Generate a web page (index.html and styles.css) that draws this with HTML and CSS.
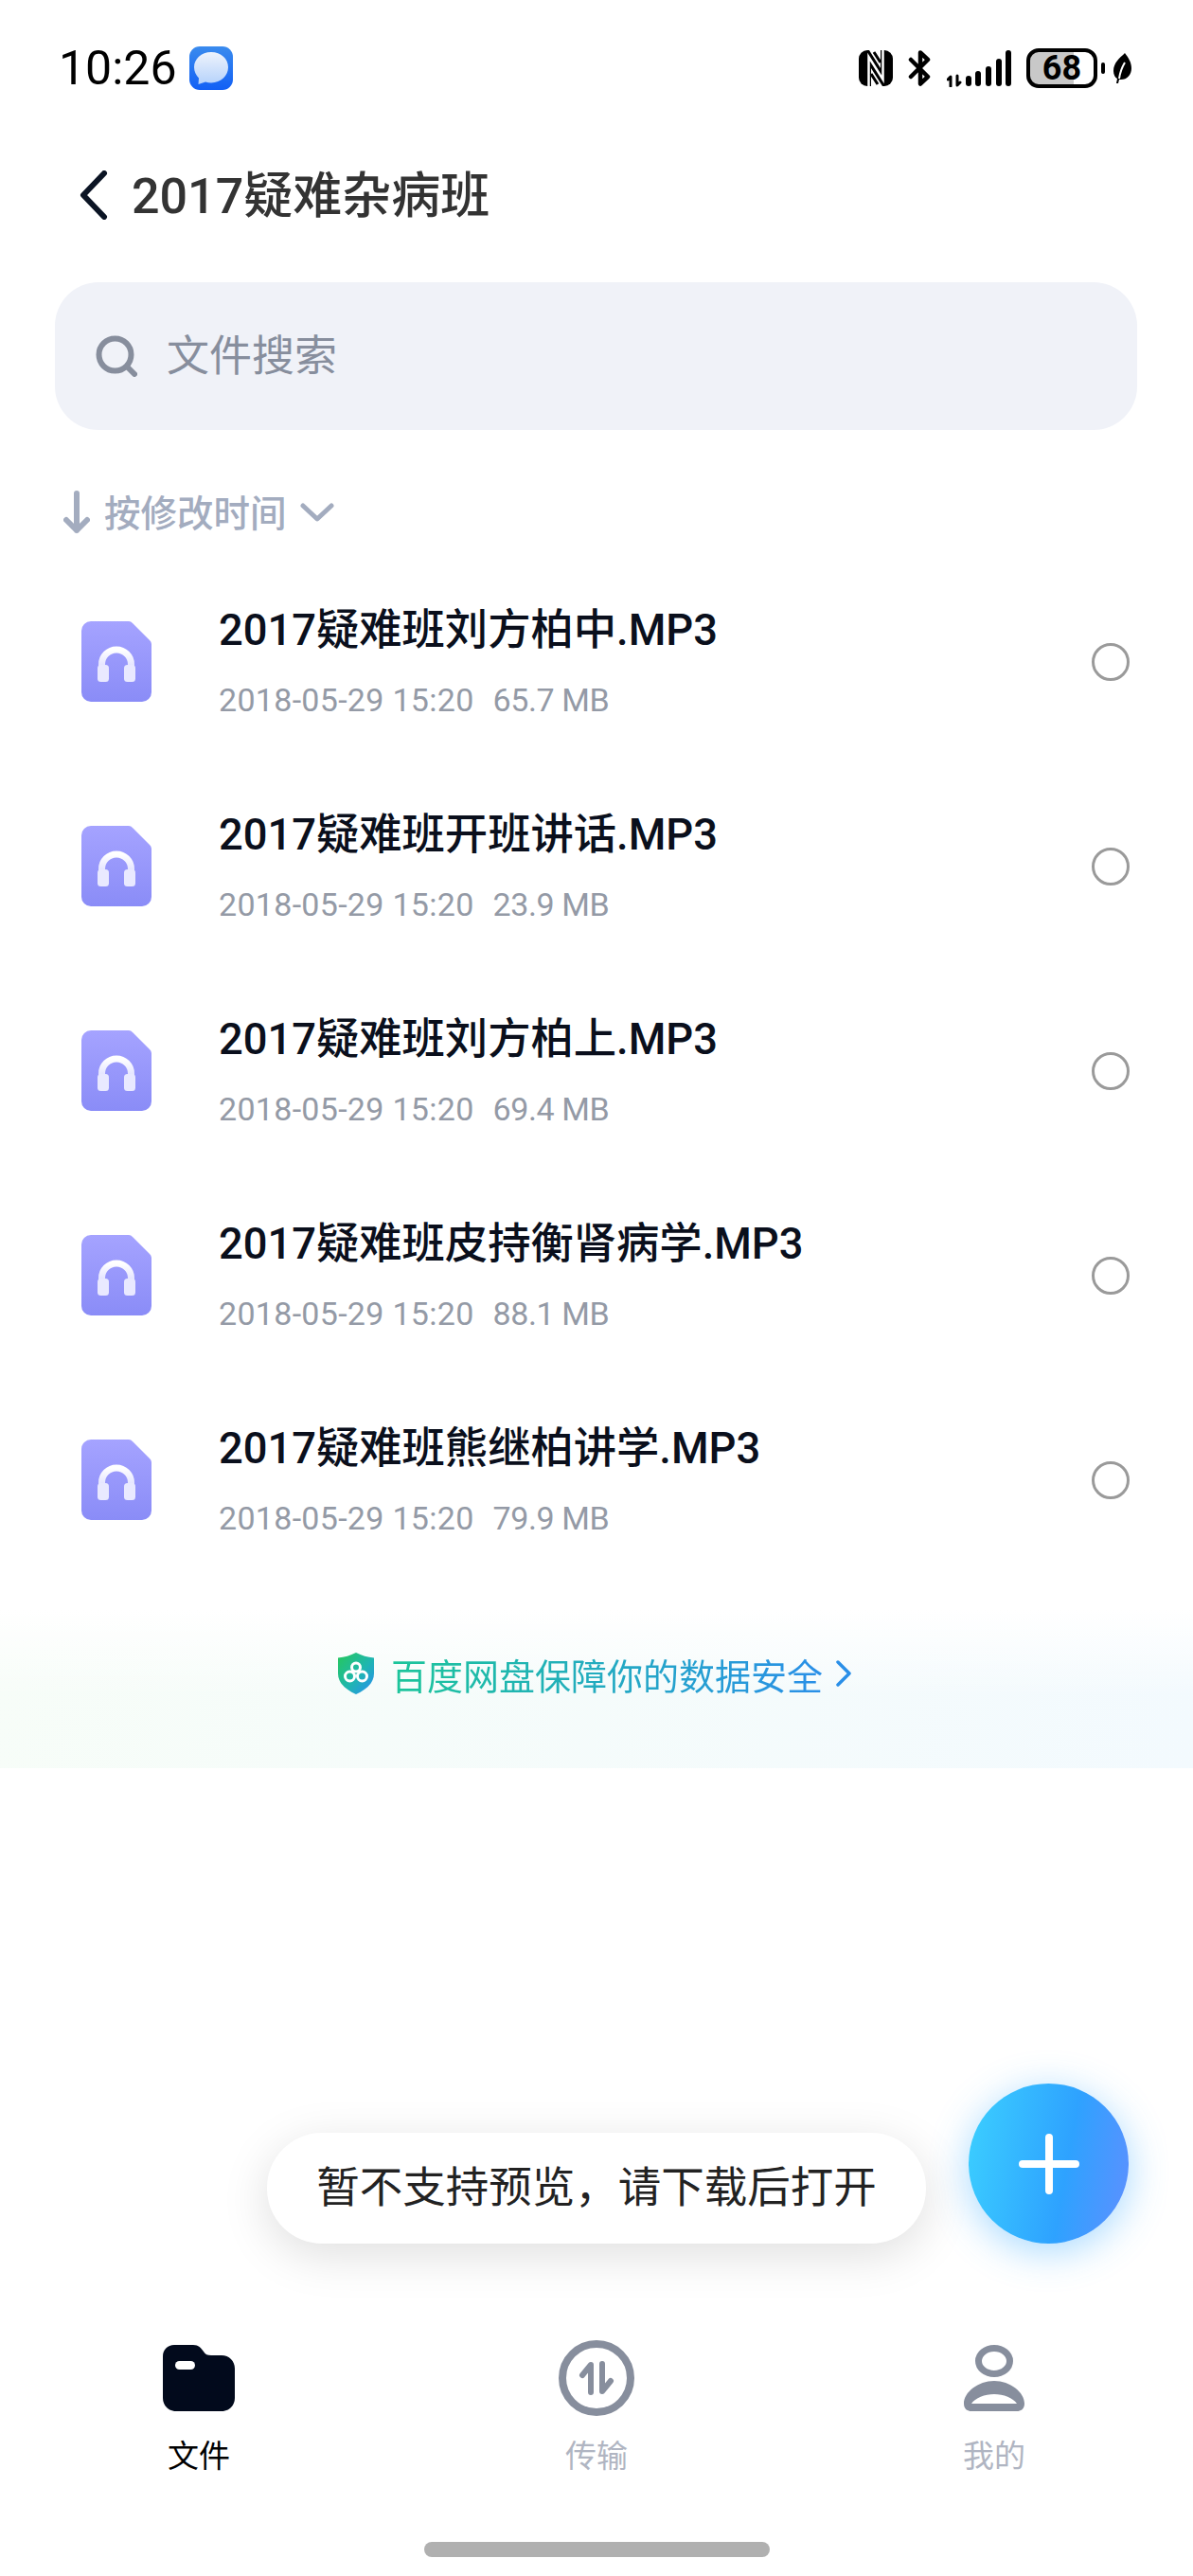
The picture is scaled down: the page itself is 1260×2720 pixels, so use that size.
FILE: index.html
```html
<!DOCTYPE html>
<html lang="zh-CN">
<head>
    <meta charset="UTF-8">
    <meta name="viewport" content="width=device-width, initial-scale=1.0">
    <title>2017疑难杂病班</title>
    <link rel="stylesheet" href="styles.css">
</head>
<body>
    <svg class="defs" width="0" height="0">
        <defs>
            <linearGradient id="fileFill" x1="0" y1="0" x2="0" y2="1">
                <stop offset="0" stop-color="#a5a3ff"/>
                <stop offset="1" stop-color="#8a8cf7"/>
            </linearGradient>
            <linearGradient id="phoneFill" x1="0" y1="0" x2="0" y2="1">
                <stop offset="0" stop-color="#ffffff"/>
                <stop offset="1" stop-color="#dcdcff"/>
            </linearGradient>
            <linearGradient id="shieldFill" x1="0" y1="0" x2="1" y2="1">
                <stop offset="0" stop-color="#26c85a"/>
                <stop offset="0.55" stop-color="#1fb6b0"/>
                <stop offset="1" stop-color="#2a8cf5"/>
            </linearGradient>
            <linearGradient id="msgFill" x1="0" y1="0" x2="0" y2="1">
                <stop offset="0" stop-color="#3a8bee"/>
                <stop offset="1" stop-color="#1260f5"/>
            </linearGradient>
            <linearGradient id="bubbleFill" x1="0" y1="0" x2="0" y2="1">
                <stop offset="0" stop-color="#eef3fc"/>
                <stop offset="1" stop-color="#b5d2fb"/>
            </linearGradient>
            <symbol id="audio-file" viewBox="0 0 74 85">
                <path d="M10 0H50a6 6 0 0 1 4 2L72 20a6 6 0 0 1 2 4V75a10 10 0 0 1-10 10H10A10 10 0 0 1 0 75V10A10 10 0 0 1 10 0z" fill="url(#fileFill)"/>
                <path d="M21.500 52V45.500a15.500 15.500 0 0 1 31 0V52" fill="none" stroke="url(#phoneFill)" stroke-width="7"/>
                <rect x="17" y="46" width="12" height="18" rx="3.500" fill="#e9e9ff"/>
                <rect x="45" y="46" width="12" height="18" rx="3.500" fill="#e9e9ff"/>
            </symbol>
        </defs>
    </svg>

    <div class="page">
        <div class="statusbar">
            <span class="time">10:26</span>
            <svg class="msg-icon" width="46" height="46" viewBox="0 0 46 46">
                <rect width="46" height="46" rx="11" fill="url(#msgFill)"/>
                <path d="M23 6C12.500 6 5 13.500 5 22c0 4.500 2 8.500 5 11.500L9.500 40 17 37.500c2 .6 4 .9 6 .9 10.500 0 18-7.500 18-16.400S33.500 6 23 6z" fill="url(#bubbleFill)"/>
            </svg>
            <div class="status-right">
                <svg width="36" height="38" viewBox="0 0 36 38">
                    <rect width="36" height="38" rx="9" fill="#000"/>
                    <path d="M10.500 38V7L25.500 31V0" fill="none" stroke="#fff" stroke-width="2.500"/>
                    <path d="M13 13V38H25L13 19z" fill="#fff"/>
                    <path d="M23 25V0H11L23 19z" fill="#fff"/>
                    <path d="M13 25L20 36M16 2L23 13" stroke="#000" stroke-width="3" fill="none"/>
                </svg>
                <svg width="25" height="40" viewBox="0 0 25 40">
                    <path d="M3 11L21 29L13 36.500V3.500L21 11L3 29" fill="none" stroke="#000" stroke-width="4.500" stroke-linecap="round" stroke-linejoin="round"/>
                </svg>
                <svg width="68" height="40" viewBox="0 0 68 40">
                    <path d="M4 39V29L1 32M11 28V38L14 35" fill="none" stroke="#000" stroke-width="3" stroke-linecap="round" stroke-linejoin="round"/>
                    <rect x="20" y="28" width="6" height="11" rx="3"/>
                    <rect x="30" y="23" width="6" height="16" rx="3"/>
                    <rect x="41" y="18" width="6" height="21" rx="3"/>
                    <rect x="52" y="10" width="6" height="29" rx="3"/>
                    <rect x="62" y="1" width="6" height="38" rx="3"/>
                </svg>
                <div class="battery">68</div>
                <div class="battery-nub"></div>
                <svg width="20" height="32" viewBox="0 0 20 32">
                    <path d="M13 0C8 5 1 10 1 19c0 4 2 7 4 8l-1 5h2l1-4c8 1 13-5 13-12 0-6-3-11-7-16z" fill="#000"/>
                    <path d="M7 27C8 20 10 15 13 10" fill="none" stroke="#fff" stroke-width="2"/>
                </svg>
            </div>
        </div>

        <div class="header">
            <svg class="back-icon" width="30" height="52" viewBox="0 0 30 52">
                <path d="M26 3L4 26L26 49" fill="none" stroke="#0b1424" stroke-width="6" stroke-linecap="round" stroke-linejoin="round"/>
            </svg>
            <h1>2017疑难杂病班</h1>
        </div>

        <div class="search">
            <svg width="44" height="44" viewBox="0 0 44 44">
                <circle cx="20.500" cy="20.500" r="17" fill="none" stroke="#878e9d" stroke-width="6"/>
                <path d="M33 33L41 41" stroke="#878e9d" stroke-width="6" stroke-linecap="round"/>
            </svg>
            <span>文件搜索</span>
        </div>

        <div class="sort">
            <svg class="sort-arrow" width="28" height="46" viewBox="0 0 28 46">
                <path d="M14 3V42M3 31L14 42L25 31" fill="none" stroke="#a3acbf" stroke-width="6" stroke-linecap="round" stroke-linejoin="round"/>
            </svg>
            <span>按修改时间</span>
            <svg class="sort-chevron" width="36" height="20" viewBox="0 0 36 20">
                <path d="M3 3L18 17L33 3" fill="none" stroke="#a3acbf" stroke-width="5" stroke-linecap="round" stroke-linejoin="round"/>
            </svg>
        </div>

        <div class="file-list">
            <div class="file-row">
                <svg class="file-icon"><use href="#audio-file"/></svg>
                <div class="file-info">
                    <div class="file-name">2017疑难班刘方柏中.MP3</div>
                    <div class="file-meta"><span>2018-05-29 15:20</span><span>65.7 MB</span></div>
                </div>
                <div class="radio"></div>
            </div>
            <div class="file-row">
                <svg class="file-icon"><use href="#audio-file"/></svg>
                <div class="file-info">
                    <div class="file-name">2017疑难班开班讲话.MP3</div>
                    <div class="file-meta"><span>2018-05-29 15:20</span><span>23.9 MB</span></div>
                </div>
                <div class="radio"></div>
            </div>
            <div class="file-row">
                <svg class="file-icon"><use href="#audio-file"/></svg>
                <div class="file-info">
                    <div class="file-name">2017疑难班刘方柏上.MP3</div>
                    <div class="file-meta"><span>2018-05-29 15:20</span><span>69.4 MB</span></div>
                </div>
                <div class="radio"></div>
            </div>
            <div class="file-row">
                <svg class="file-icon"><use href="#audio-file"/></svg>
                <div class="file-info">
                    <div class="file-name">2017疑难班皮持衡肾病学.MP3</div>
                    <div class="file-meta"><span>2018-05-29 15:20</span><span>88.1 MB</span></div>
                </div>
                <div class="radio"></div>
            </div>
            <div class="file-row">
                <svg class="file-icon"><use href="#audio-file"/></svg>
                <div class="file-info">
                    <div class="file-name">2017疑难班熊继柏讲学.MP3</div>
                    <div class="file-meta"><span>2018-05-29 15:20</span><span>79.9 MB</span></div>
                </div>
                <div class="radio"></div>
            </div>
        </div>

        <div class="safe-banner">
            <svg width="38" height="44" viewBox="0 0 38 44">
                <path d="M19 0C25 3 31 5 38 5.500V22C38 32 30 39 19 44 8 39 0 32 0 22V5.500C7 5 13 3 19 0z" fill="url(#shieldFill)"/>
                <g fill="none" stroke="#fff" stroke-width="3">
                    <circle cx="19" cy="15.500" r="4.500"/>
                    <circle cx="12.500" cy="25" r="5"/>
                    <circle cx="25.500" cy="25" r="5"/>
                </g>
            </svg>
            <span class="safe-text">百度网盘保障你的数据安全</span>
            <svg width="16" height="28" viewBox="0 0 16 28">
                <path d="M2 2L14 14L2 26" fill="none" stroke="#2a8fe8" stroke-width="3.500" stroke-linecap="round" stroke-linejoin="round"/>
            </svg>
        </div>

        <div class="tabbar">
            <div class="tab active">
                <div class="tab-icon">
                    <svg width="76" height="70" viewBox="0 0 76 70">
                        <path d="M12 0H32c6 0 8 3 11 7 2 3 4 4 8 4H62c8 0 14 6 14 14V56c0 8-6 14-14 14H14C6 70 0 64 0 56V12C0 5 5 0 12 0z" fill="#020a1c"/>
                        <rect x="13" y="17" width="21" height="9" rx="4.500" fill="#fff"/>
                    </svg>
                </div>
                <span>文件</span>
            </div>
            <div class="tab">
                <div class="tab-icon">
                    <svg width="80" height="80" viewBox="0 0 80 80">
                        <circle cx="40" cy="40" r="36" fill="none" stroke="#878e9d" stroke-width="8"/>
                        <path d="M34 55V26L25 37M46 25V54L55 43" fill="none" stroke="#878e9d" stroke-width="6" stroke-linecap="round" stroke-linejoin="round"/>
                    </svg>
                </div>
                <span>传输</span>
            </div>
            <div class="tab">
                <div class="tab-icon">
                    <svg width="64" height="70" viewBox="0 0 64 70">
                        <ellipse cx="32" cy="17" rx="16.500" ry="13.500" fill="none" stroke="#878e9d" stroke-width="7"/>
                        <path fill-rule="evenodd" d="M32 38C15 38 0 50 0 62c0 5 3 8 8 8H56c5 0 8-3 8-8C64 50 49 38 32 38zM8 62C12 56 22 52 32 52S52 56 56 62z" fill="#878e9d"/>
                    </svg>
                </div>
                <span>我的</span>
            </div>
        </div>

        <div class="home-bar"></div>

        <div class="toast">暂不支持预览，请下载后打开</div>
        <div class="fab">
            <svg width="64" height="64" viewBox="0 0 64 64">
                <path d="M32 4V60M4 32H60" stroke="#fff" stroke-width="8" stroke-linecap="round"/>
            </svg>
        </div>
    </div>
</body>
</html>
```

FILE: styles.css
```css
* {
    box-sizing: border-box;
}
body {
    margin: 0;
    background-color: #fff;
    font-family: Roboto, "Noto Sans CJK SC", sans-serif;
}
svg {
    display: block;
    flex-shrink: 0;
}
.defs {
    position: absolute;
}
.page {
    position: relative;
    width: 1260px;
    height: 2720px;
    display: flex;
    flex-direction: column;
    overflow: hidden;
}

/* status bar */
.statusbar {
    height: 144px;
    padding: 0 65px 0 62px;
    display: flex;
    align-items: center;
}
.time {
    font-size: 50px;
    color: #000;
}
.msg-icon {
    margin-left: 13px;
}
.status-right {
    margin-left: auto;
    display: flex;
    align-items: center;
    gap: 16px;
}
.battery {
    width: 75px;
    height: 42px;
    border: 4px solid #000;
    border-radius: 13px;
    background: linear-gradient(to right, #c8c8c8 69%, #fff 69%);
    font-size: 36px;
    font-weight: 700;
    line-height: 34px;
    text-align: center;
    color: #000;
}
.battery-nub {
    width: 4px;
    height: 12px;
    margin-left: -12px;
    margin-right: -8px;
    border-radius: 2px;
    background-color: #000;
}

/* header */
.header {
    height: 124px;
    padding-left: 84px;
    display: flex;
    align-items: center;
}
.header h1 {
    margin: 0 0 8px 25px;
    font-size: 52px;
    font-weight: 500;
    color: #333;
}

/* search */
.search {
    height: 156px;
    margin: 30px 59px 0 58px;
    padding-left: 43px;
    display: flex;
    align-items: center;
    gap: 31px;
    border-radius: 46px;
    background-color: #f0f2f8;
    font-size: 45px;
    color: #878e9d;
}
.search span {
    margin-bottom: 8px;
}

/* sort */
.sort {
    height: 60px;
    margin-top: 57px;
    padding-left: 67px;
    display: flex;
    align-items: center;
    font-size: 38.500px;
    font-weight: 500;
    color: #a3acbf;
}
.sort span {
    margin-bottom: 5px;
}
.sort-arrow {
    margin-right: 15px;
}
.sort-chevron {
    margin-left: 14px;
}

/* file list */
.file-list {
    margin-top: 20px;
}
.file-row {
    height: 216px;
    padding: 0 67px 0 86px;
    display: flex;
    align-items: center;
}
.file-icon {
    width: 74px;
    height: 85px;
    margin-bottom: 2px;
}
.file-info {
    margin: 0 0 3px 71px;
    flex: 1;
}
.file-name {
    font-size: 45.300px;
    font-weight: 500;
    line-height: 60px;
    color: #0a0f1c;
}
.file-meta {
    margin-top: 22px;
    display: flex;
    gap: 20px;
    font-size: 34px;
    letter-spacing: 0.3px;
    line-height: 42px;
    color: #949aa6;
}
.file-meta span + span {
    letter-spacing: -0.4px;
}
.radio {
    width: 40px;
    height: 40px;
    border: 3.500px solid #9a9a9a;
    border-radius: 50%;
}

/* banner */
.safe-banner {
    height: 167px;
    margin-top: 29px;
    padding: 0 4px 33px 0;
    display: flex;
    align-items: center;
    justify-content: center;
    background: linear-gradient(to bottom, rgba(255, 255, 255, 1), rgba(255, 255, 255, 0) 55%), linear-gradient(100deg, #f7fdf8, #f3fafe);
}
.safe-text {
    margin: 0 14px 0 18px;
    font-size: 38px;
    background: linear-gradient(to right, #1cc59a, #2a8fe8);
    -webkit-background-clip: text;
    background-clip: text;
    color: transparent;
}

/* bottom tabs */
.tabbar {
    margin-top: auto;
    display: grid;
    grid-template-columns: repeat(3, 1fr);
}
.tab {
    display: flex;
    flex-direction: column;
    align-items: center;
    font-size: 33px;
    color: #b0b5c2;
}
.tab.active {
    color: #000;
}
.tab-icon {
    height: 80px;
    display: flex;
    align-items: center;
}
.tab span {
    margin-top: 20px;
    line-height: 46px;
}
.home-bar {
    width: 365px;
    height: 16px;
    margin: 67px auto 20px;
    border-radius: 8px;
    background-color: #b0b0b0;
}

/* floating */
.toast {
    position: absolute;
    left: 282px;
    top: 2252px;
    width: 696px;
    height: 117px;
    border-radius: 58px;
    background-color: #fff;
    box-shadow: 0 12px 50px rgba(0, 0, 0, 0.13);
    font-size: 45.500px;
    line-height: 117px;
    text-align: center;
    color: #222;
}
.fab {
    position: absolute;
    left: 1023px;
    top: 2200px;
    width: 169px;
    height: 169px;
    display: flex;
    align-items: center;
    justify-content: center;
    border-radius: 50%;
    background: linear-gradient(100deg, #3cd0ff, #2ea2ff 60%, #5f8fff);
    box-shadow: 0 8px 40px rgba(60, 170, 255, 0.45);
}
```
